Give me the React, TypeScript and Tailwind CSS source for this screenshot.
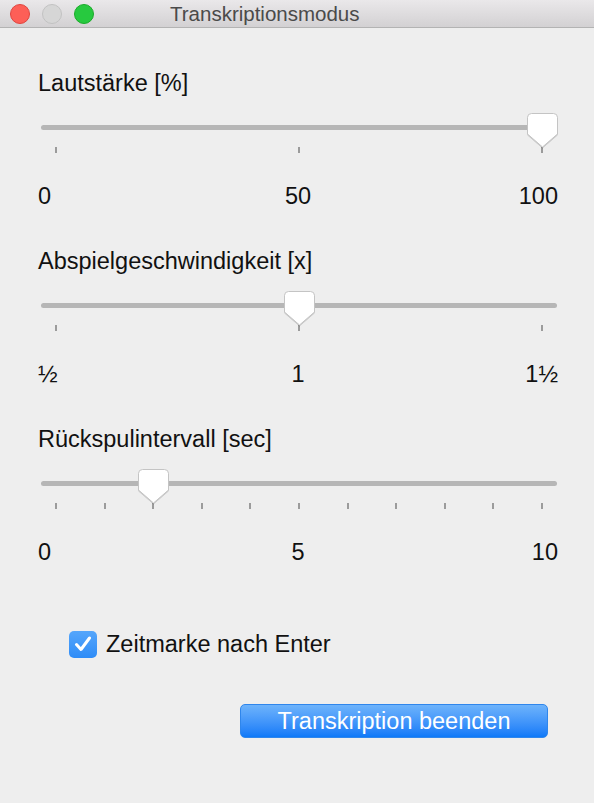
const SLIDERS = [
  { label: "Lautstärke [%]", ticks: 3, value: 1, marks: ["0", "50", "100"] },
  { label: "Abspielgeschwindigkeit [x]", ticks: 3, value: 0.5, marks: ["½", "1", "1½"] },
  { label: "Rückspulintervall [sec]", ticks: 11, value: 0.2, marks: ["0", "5", "10"] },
];

function Thumb() {
  return (
    <svg width="31" height="35" viewBox="0 0 31 35" className="drop-shadow-[0_1px_0.5px_rgba(0,0,0,0.15)]">
      <path
        d="M4.5 0.5H26.5Q30.5 0.5 30.5 4.5V21L15.5 34L0.5 21V4.5Q0.5 0.5 4.5 0.5Z"
        fill="#ffffff"
        stroke="#c4c4c4"
      />
    </svg>
  );
}

function Slider({ label, ticks, value, marks }: (typeof SLIDERS)[number]) {
  return (
    <div className="mb-[37px]">
      <div className="h-[28px] leading-[28px]">{label}</div>
      <div className="relative mt-[28px] ml-[3px] mr-[1px]">
        <div className="h-[5px] rounded-full bg-[#b6b6b6]" />
        <div className="mt-[17px] flex h-[6px] justify-between px-[14px]">
          {Array.from({ length: ticks }).map((_, i) => (
            <div key={i} className="w-[2px] bg-[#9b9b9b]" />
          ))}
        </div>
        <div
          className="absolute top-[-12px] -ml-[15px]"
          style={{ left: `calc(15px + (100% - 30px) * ${value})` }}
        >
          <Thumb />
        </div>
      </div>
      <div className="mt-[29px] grid h-[28px] grid-cols-3 leading-[28px]">
        <span>{marks[0]}</span>
        <span className="text-center">{marks[1]}</span>
        <span className="text-right">{marks[2]}</span>
      </div>
    </div>
  );
}

export default function App() {
  return (
    <div className="h-[803px] w-[594px] overflow-hidden bg-[#eeeeee] font-['Liberation_Sans',Arial,sans-serif] text-[#111111]">
      <div className="flex h-[28px] items-center border-b border-[#b3b3b3] bg-gradient-to-b from-[#eae8ea] to-[#d3d1d3] pl-[10px]">
        <div className="flex gap-[12px]">
          <span className="h-[20px] w-[20px] rounded-full border border-[#e0443e] bg-[#fd5f57]" />
          <span className="h-[20px] w-[20px] rounded-full border border-[#c2c2c2] bg-[#d6d6d6]" />
          <span className="h-[20px] w-[20px] rounded-full border border-[#1aab29] bg-[#27c93f]" />
        </div>
        <span className="ml-[76px] text-[20.5px] leading-[28px] text-[#4a4a4a]">Transkriptionsmodus</span>
      </div>

      <div className="pt-[41px] pl-[38px] pr-[36px] text-[23.5px]">
        {SLIDERS.map((s) => (
          <Slider key={s.label} {...s} />
        ))}

        <div className="mt-[64px] ml-[31px] flex h-[28px] items-center gap-[9px] leading-[28px]">
          <span className="flex h-[27px] w-[28px] items-center justify-center rounded-[5px] bg-gradient-to-b from-[#55a6fb] to-[#2e8cf7]">
            <svg width="18" height="16" viewBox="0 0 18 16">
              <path d="M2.5 8.5L7 13.5L15.5 2" fill="none" stroke="#ffffff" strokeWidth="3" strokeLinecap="round" strokeLinejoin="round" />
            </svg>
          </span>
          <span>Zeitmarke nach Enter</span>
        </div>

        <div className="mt-[46px] flex justify-end pr-[10px]">
          <button className="h-[34px] w-[308px] rounded-[5px] border border-[#2f86ec] bg-gradient-to-b from-[#6db3fb] to-[#0c79f8] text-[23.5px] leading-[30px] text-white">
            Transkription beenden
          </button>
        </div>
      </div>
    </div>
  );
}
